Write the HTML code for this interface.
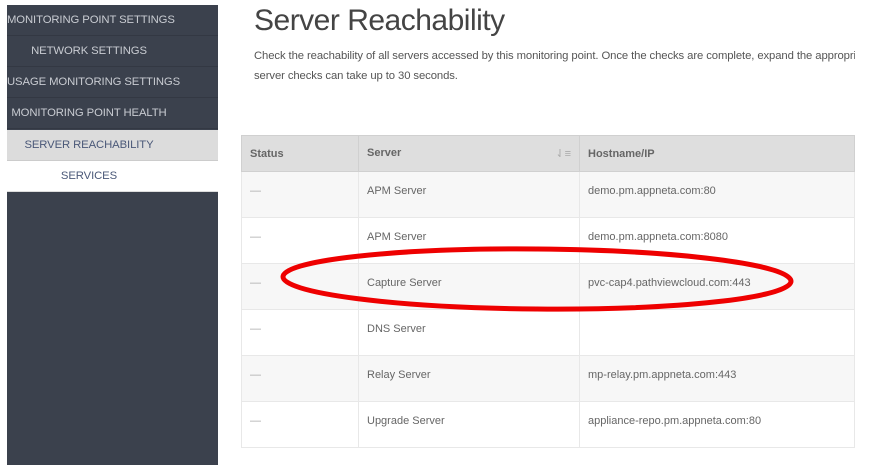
<!DOCTYPE html>
<html><head><style>
*{margin:0;padding:0;box-sizing:border-box}
body{width:874px;height:465px;overflow:hidden;background:#fff;font-family:"Liberation Sans",sans-serif;position:relative}
#side{position:absolute;left:7px;top:5px;width:211px;height:460px;background:#3b414d;overflow:hidden}
.it{position:absolute;left:0;width:211px;height:31px;line-height:30px;font-size:11.3px;color:#c9ccd2;text-align:center;border-bottom:1px solid #333843;white-space:nowrap;padding-right:47px;letter-spacing:-0.1px}
.it span{display:inline-block;width:164px;text-align:center;white-space:nowrap}
h1{position:absolute;left:254px;top:4px;font-size:30px;font-weight:normal;color:#444;letter-spacing:-0.5px}
.p{position:absolute;left:254px;font-size:11.3px;color:#555;white-space:nowrap;letter-spacing:-0.1px;width:601px;overflow:hidden}
table{position:absolute;left:241px;top:135px;width:614px;border-collapse:collapse;font-size:11px;color:#666}
td,th{border:1px solid #e8e8e8;padding:0 8px;text-align:left;vertical-align:top}
th{height:36px;background:#dedede;color:#666;font-weight:bold;vertical-align:middle;border-color:#d0d0d0}
td{height:46px;padding-top:13px}
tr:nth-child(even) td{background:#f7f7f7}
.d{color:#aaa}
</style></head><body>
<div id="side">
<div class="it" style="top:0"><span>MONITORING POINT SETTINGS</span></div>
<div class="it" style="top:31px"><span>NETWORK SETTINGS</span></div>
<div class="it" style="top:62px"><span>USAGE MONITORING SETTINGS</span></div>
<div class="it" style="top:93px"><span>MONITORING POINT HEALTH</span></div>
<div class="it" style="top:125px;background:#dcdcdc;color:#4a5878;border-color:#ccc"><span>SERVER REACHABILITY</span></div>
<div class="it" style="top:156px;background:#fff;color:#4a5878;border-color:#ddd"><span>SERVICES</span></div>
</div>
<h1>Server Reachability</h1>
<div class="p" style="top:50px">Check the reachability of all servers accessed by this monitoring point. Once the checks are complete, expand the appropriate</div>
<div class="p" style="top:70px">server checks can take up to 30 seconds.</div>
<table>
<tr><th style="width:117px">Status</th><th style="width:221px">Server <span style="float:right;color:#aaa;font-weight:normal">⇃≡</span></th><th>Hostname/IP</th></tr>
<tr><td class="d">—</td><td>APM Server</td><td>demo.pm.appneta.com:80</td></tr>
<tr><td class="d">—</td><td>APM Server</td><td>demo.pm.appneta.com:8080</td></tr>
<tr><td class="d">—</td><td>Capture Server</td><td>pvc-cap4.pathviewcloud.com:443</td></tr>
<tr><td class="d">—</td><td>DNS Server</td><td></td></tr>
<tr><td class="d">—</td><td>Relay Server</td><td>mp-relay.pm.appneta.com:443</td></tr>
<tr><td class="d">—</td><td>Upgrade Server</td><td>appliance-repo.pm.appneta.com:80</td></tr>
</table>
<svg style="position:absolute;left:0;top:0" width="874" height="465"><ellipse cx="537" cy="279" rx="254" ry="30" fill="none" stroke="#ee0000" stroke-width="5" transform="rotate(0.5 537 279)"/></svg>
</body></html>
